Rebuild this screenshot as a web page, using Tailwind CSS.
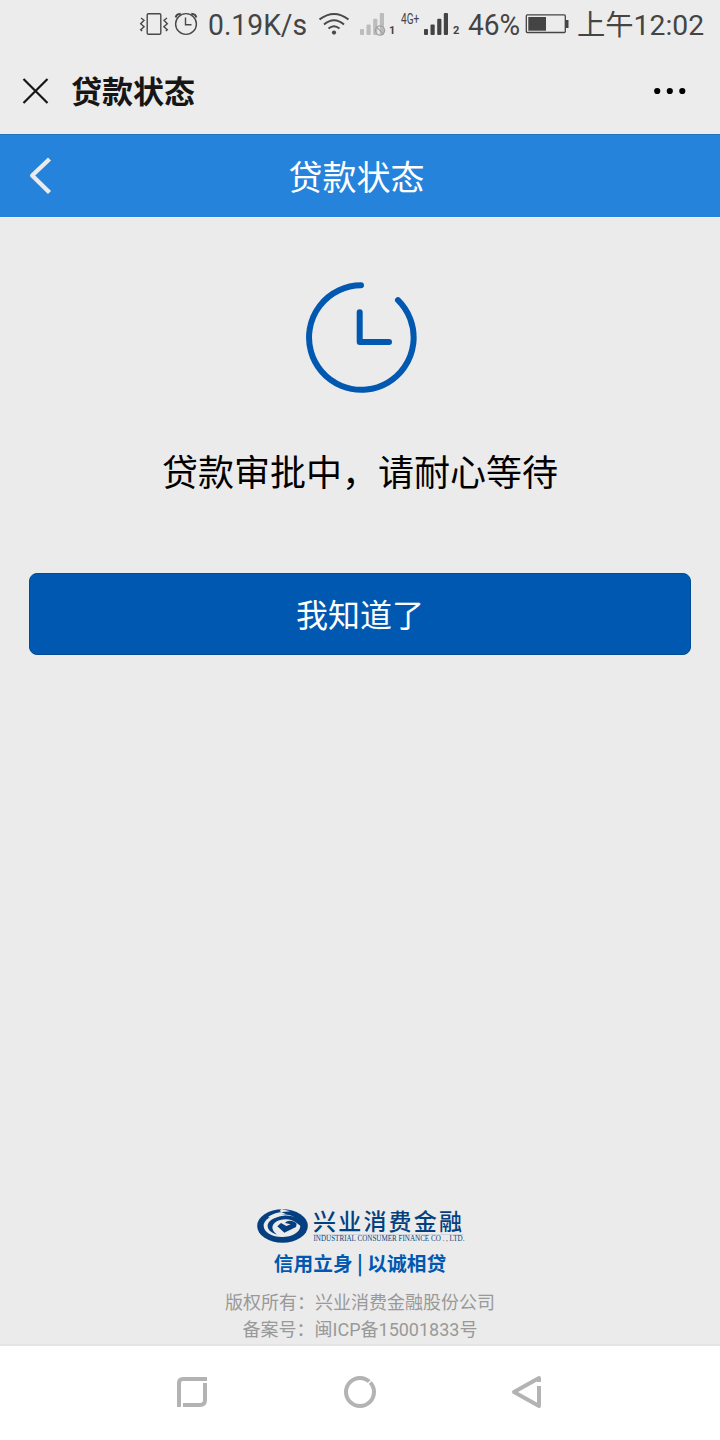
<!DOCTYPE html>
<html lang="zh-CN">
<head>
<meta charset="utf-8">
<title>贷款状态</title>
<script src="https://cdn.jsdelivr.net/npm/@tailwindcss/browser@4"></script>
</head>
<body class="bg-[#ebebeb] font-['Noto_Sans_CJK_SC',sans-serif]">
<div class="w-[720px] h-[1440px] flex flex-col overflow-hidden">
  <!-- Status bar -->
  <div class="h-[50px] shrink-0 bg-[#ececec] flex items-center text-[#444] whitespace-nowrap font-[Roboto,'Noto_Sans_CJK_SC',sans-serif]">
    <svg class="ml-[138px] w-[64px] h-[50px] shrink-0" viewBox="138 0 64 50" fill="none" stroke="#484848" stroke-width="1.4">
      <rect x="147.200" y="13.700" width="13.600" height="20.600" rx="1.200"/>
      <path d="M141 18l3 2.300-3.300 3.400 3.400 3-3.400 3 1.500 1.300M167 18l-3 2.300 3.300 3.400-3.400 3 3.400 3-1.500 1.300"/>
      <circle cx="186" cy="24" r="10.400"/>
      <path d="M185.500 17.500v7.200h6"/>
      <path d="M175.700 17.500q.5-3.500 5-3.800M196.300 17.500q-.5-3.500-5-3.800" stroke-width="2"/>
    </svg>
    <span class="ml-[6px] w-[111px] pt-[1px] text-[29px] leading-[49px] origin-left scale-x-[0.975]">0.19K/s</span>
    <svg class="w-[68px] h-[50px] shrink-0" viewBox="319 0 68 50" fill="none" stroke="#484848" stroke-width="2">
      <path d="M319.500 19.500Q334 8.500 348.500 19.500M324 24.500Q334 16 344 24.500M328.500 28.500Q334 24 339.500 28.500"/>
      <circle cx="334" cy="32.600" r="2.100" fill="#484848" stroke="none"/>
      <g fill="#bcbcbc" stroke="none"><rect x="360" y="29" width="4" height="6" rx="1"/><rect x="366.500" y="24.500" width="4.200" height="10.500" rx="1"/><rect x="373.200" y="18.700" width="4.200" height="16.300" rx="1"/><rect x="379.800" y="13" width="4.200" height="22" rx="1"/></g>
      <circle cx="380" cy="30.500" r="4.600" stroke="#a0a0a0" stroke-width="1.200"/><path d="M376.800 27.300l6.400 6.400" stroke="#a0a0a0" stroke-width="1.200"/>
    </svg>
    <span class="w-[14px] pl-[2px] text-[11px] font-bold leading-[12px] pt-[12px]">1</span>
    <span class="w-[22px] pb-[12px] text-[14px] leading-[14px] origin-left scale-x-[0.72]">4G+</span>
    <svg class="w-[28px] h-[50px] shrink-0" viewBox="423 0 28 50" fill="#444"><rect x="424" y="29" width="4" height="6" rx="1"/><rect x="430.500" y="24.500" width="4.200" height="10.500" rx="1"/><rect x="437.200" y="18.700" width="4.200" height="16.300" rx="1"/><rect x="443.800" y="13" width="4.200" height="22" rx="1"/></svg>
    <span class="w-[17px] pl-[2px] text-[11px] font-bold leading-[12px] pt-[12px]">2</span>
    <span class="w-[57px] pt-[1px] text-[29px] leading-[49px] origin-left scale-x-[0.97]">46%</span>
    <svg class="w-[45px] h-[50px] shrink-0" viewBox="525 0 45 50"><rect x="526.300" y="14.900" width="39" height="17.600" rx="1" fill="none" stroke="#444" stroke-width="1.300"/><rect x="528.300" y="17" width="17.700" height="13.700" fill="#444"/><rect x="565.500" y="20" width="3" height="8" fill="#444"/></svg>
    <span class="ml-[7px] pt-[2px] text-[28.300px] leading-[48px]">上午12:02</span>
  </div>
  <!-- Browser title bar -->
  <div class="h-[84px] shrink-0 bg-[#ececec] flex items-center pb-[2px]">
    <svg class="ml-[22px] w-[28px] h-[28px]" viewBox="0 0 28 28" stroke="#161616" stroke-width="2.200"><path d="M1.500 2l24 24M25.500 2l-24 24"/></svg>
    <span class="ml-[21px] pb-[2px] text-[31px] leading-[60px] font-bold text-[#161616]">贷款状态</span>
    <svg class="ml-auto mr-[34px] w-[32px] h-[8px]" viewBox="0 0 32 8"><circle cx="3.200" cy="4" r="3.100"/><circle cx="15.800" cy="4" r="3.100"/><circle cx="28.300" cy="4" r="3.100"/></svg>
  </div>
  <!-- Page header -->
  <div class="h-[83px] shrink-0 bg-[#2683db] border-t border-[#2272be] grid grid-cols-[100px_1fr_107px] items-center">
    <svg class="ml-[29px] w-[24px] h-[38px]" viewBox="0 0 24 38" fill="none" stroke="#ebebeb" stroke-width="4.400" stroke-linejoin="round"><path d="M20.500 2L3.200 18.500L20.500 35.500"/></svg>
    <span class="text-center text-[34px] leading-[60px] text-white">贷款状态</span>
  </div>
  <!-- Content -->
  <main class="flex-1 flex flex-col items-center border-t border-[#f3f3f3]">
    <svg class="mt-[62px] w-[114px] h-[114px]" viewBox="303 280 114 114" fill="none" stroke="#0058b0" stroke-width="6" stroke-linecap="round" stroke-linejoin="round">
      <path d="M361 285.200A52.300 52.300 0 1 0 398 300.200"/><path d="M359.700 312.300V342H389"/>
    </svg>
    <p class="mt-[46px] h-[60px] text-[36px] leading-[60px] text-black">贷款审批中，请耐心等待</p>
    <button class="mt-[73px] w-[662px] h-[82px] shrink-0 rounded-lg bg-[#0058b0] border border-[#004c98] text-white text-[32px] leading-[78px] pb-[2px]">我知道了</button>
    <footer class="mt-auto flex flex-col items-center h-[135px]">
      <div class="flex w-[206px] h-[35px]">
        <svg class="w-[51px] h-[34px] shrink-0" viewBox="20 26 153 102" fill="none">
          <ellipse cx="96.500" cy="77" rx="76" ry="50" fill="#053f80"/>
          <ellipse cx="95" cy="76" rx="55" ry="34" fill="#ebebeb"/>
          <path d="M93 26L120 33L96 35C76 37 61 43 53 51L70 54C79 46 92 42 106 41L88 33Z" fill="#ebebeb"/>
          <path d="M155 80C155 57 128 43 100 46C72 49 50 63 52 78C53 91 66 99 80 103C64 91 61 76 76 65C93 54 123 53 140 69Z" fill="#053f80"/>
          <path d="M81 78L92 68L108 77L121 72L104 68C111 59 129 59 139 70L137 80L102 97Z" fill="#053f80"/>
        </svg>
        <div class="ml-[5px] flex flex-col text-[#053f80]">
          <span class="w-[151px] h-[25px] text-[23px] leading-[23px] font-medium tracking-[2.200px] whitespace-nowrap">兴业消费金融</span>
          <span class="w-[151px] h-[8px] border-t border-[#cfd5dc] whitespace-nowrap font-['Liberation_Serif',serif]"><svg class="w-[151px] h-[8px] overflow-visible" viewBox="0 0 151 8"><text x="0.500" y="6.200" font-size="7.200" textLength="151" lengthAdjust="spacingAndGlyphs" fill="#053f80">INDUSTRIAL CONSUMER FINANCE CO . , LTD.</text></svg></span>
        </div>
      </div>
      <p class="mt-[4px] h-[30px] text-[19.700px] leading-[30px] font-bold text-[#0058b0] whitespace-pre">信用立身 | 以诚相贷</p>
      <p class="mt-[10px] h-[27px] text-[18px] leading-[27px] text-[#999]">版权所有：兴业消费金融股份公司</p>
      <p class="h-[27px] mt-[1px] text-[18px] leading-[27px] text-[#999] font-[Roboto,'Noto_Sans_CJK_SC',sans-serif]">备案号：闽ICP备15001833号</p>
    </footer>
  </main>
  <!-- System navigation bar -->
  <nav class="h-[96px] shrink-0 bg-white border-t-2 border-[#e4e4e4] flex items-center justify-center pb-[2px]">
    <svg class="w-[370px] h-[36px]" viewBox="175 1374 370 36" fill="none" stroke="#b3b3b3" stroke-width="4">
      <path d="M179 1407V1383Q179 1379 183 1379H207M205 1383V1400Q205 1405 200 1405H183"/>
      <circle cx="360" cy="1392" r="14"/><path d="M367 1384.500l6-5.500" stroke="#fff" stroke-width="1.500"/>
      <path d="M539 1382V1378L514 1392L539 1406V1386" stroke-linejoin="round"/><path d="M536 1385.500l6-3.500" stroke="#fff" stroke-width="1.500"/>
    </svg>
  </nav>
</div>
</body>
</html>
